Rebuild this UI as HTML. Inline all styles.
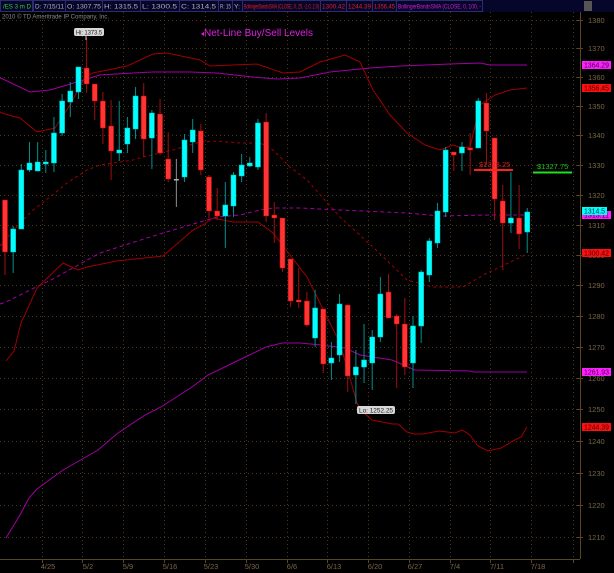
<!DOCTYPE html>
<html><head><meta charset="utf-8"><style>
html,body{margin:0;padding:0;background:#000;width:614px;height:573px;overflow:hidden}
svg{display:block}
text{font-family:"Liberation Sans","DejaVu Sans",sans-serif}
</style></head><body>
<svg id="s" width="614" height="573" viewBox="0 0 614 573" xmlns="http://www.w3.org/2000/svg">
<rect width="614" height="573" fill="#000"/>
<!-- header -->
<rect x="0" y="0" width="614" height="12" fill="#06062a"/>
<g fill="none" stroke="#2c2c70" stroke-width="1">
<rect x="0.5" y="0.5" width="32" height="11"/><rect x="33.5" y="0.5" width="32" height="11"/>
<rect x="65.5" y="0.5" width="37" height="11"/><rect x="102.5" y="0.5" width="38" height="11"/>
<rect x="140.5" y="0.5" width="39" height="11"/><rect x="179.5" y="0.5" width="39" height="11"/>
<rect x="218.5" y="0.5" width="14" height="11"/><rect x="232.5" y="0.5" width="10" height="11"/>
<rect x="242.5" y="0.5" width="78" height="11"/><rect x="320.5" y="0.5" width="26" height="11"/>
<rect x="346.5" y="0.5" width="26" height="11"/><rect x="372.5" y="0.5" width="24" height="11"/>
<rect x="396.5" y="0.5" width="86" height="11"/>
</g>
<rect x="584" y="1" width="8" height="10" fill="#555"/>
<g font-size="6.5" lengthAdjust="spacingAndGlyphs">
<text x="3" y="8.5" fill="#30d030" textLength="28" lengthAdjust="spacingAndGlyphs">/ES 3 m D</text>
<text x="35" y="8.5" fill="#b0b0b0" textLength="29" lengthAdjust="spacingAndGlyphs">D: 7/15/11</text>
<text x="67" y="8.5" fill="#b0b0b0" textLength="34" lengthAdjust="spacingAndGlyphs">O: 1307.75</text>
<text x="104" y="8.5" fill="#b0b0b0" textLength="34" lengthAdjust="spacingAndGlyphs">H: 1315.5</text>
<text x="142" y="8.5" fill="#b0b0b0" textLength="35" lengthAdjust="spacingAndGlyphs">L: 1300.5</text>
<text x="181" y="8.5" fill="#b0b0b0" textLength="35" lengthAdjust="spacingAndGlyphs">C: 1314.5</text>
<text x="220" y="8.5" fill="#b0b0b0" textLength="11" lengthAdjust="spacingAndGlyphs">R: 15</text>
<text x="234" y="8.5" fill="#b0b0b0" textLength="6" lengthAdjust="spacingAndGlyphs">Y:</text>
<text x="244" y="8.5" fill="#e02020" textLength="75" lengthAdjust="spacingAndGlyphs">BollingerBandsSMA (CLOSE, 0, 25, -2.0, 2.0)</text>
<text x="322" y="8.5" fill="#e02020" textLength="23" lengthAdjust="spacingAndGlyphs">1300.42</text>
<text x="348" y="8.5" fill="#e02020" textLength="23" lengthAdjust="spacingAndGlyphs">1244.39</text>
<text x="374" y="8.5" fill="#e02020" textLength="21" lengthAdjust="spacingAndGlyphs">1356.45</text>
<text x="398" y="8.5" fill="#d020d0" textLength="83" lengthAdjust="spacingAndGlyphs">BollingerBandsSMA (CLOSE, 0, 100, -</text>
<text x="2" y="18.5" fill="#8a8a8a" textLength="107" lengthAdjust="spacingAndGlyphs">2010 © TD Ameritrade IP Company, Inc.</text>
</g>
<g id="grid" stroke="#4a3a18" stroke-width="1" stroke-dasharray="1,3"></g>
<!-- axes -->
<line x1="580.5" y1="12" x2="580.5" y2="559" stroke="#5a4520"/>
<line x1="0" y1="559.5" x2="580" y2="559.5" stroke="#5a4520"/>
<g id="ylab" font-size="7.5" fill="#7a6545"></g>
<g font-size="7.5" fill="#7a6545" text-anchor="middle">
<text x="48" y="569">4/25</text><text x="88" y="569">5/2</text><text x="128" y="569">5/9</text>
<text x="170" y="569">5/16</text><text x="211" y="569">5/23</text><text x="252" y="569">5/30</text>
<text x="292" y="569">6/6</text><text x="334" y="569">6/13</text><text x="375" y="569">6/20</text>
<text x="415" y="569">6/27</text><text x="455" y="569">7/4</text><text x="497" y="569">7/11</text>
<text x="538" y="569">7/18</text>
</g>
<!-- bands -->
<g fill="none" stroke-width="1">
<polyline stroke="#a000a0" points="0,78 5,80 30,92 50,90 77,82 100,75 133,73 153,72 190,72 217,73 253,77 277,79 300,78 330,72 370,68 400,66 450,64 480,63 490,65 527,65"/>
<polyline stroke="#a000a0" stroke-dasharray="4,3" points="0,304 6,302 30,290 51,280 100,253 150,237 183,227 217,217 240,215 260,210 273,208 300,208 340,210 407,213 440,216 490,215 527,215"/>
<polyline stroke="#a000a0" points="6,538 20,515 29,498 37,489 63,470 98,450 118,433 145,415 161,407 192,387 208,375 235,362 266,347 282,343 300,343 321,345 345,348 360,355 392,360 415,370 470,371 474,372 527,372"/>
<polyline stroke="#a00000" points="0,112 5,114 20,118 37,132 55,128 70,105 85,77 93,73 127,66 153,54 167,53 200,60 210,66 233,65 257,64 283,73 300,72 320,62 345,55 360,62 373,90 390,115 407,133 425,145 440,150 453,145 462,148 470,147 480,105 495,95 510,90 527,88"/>
<polyline stroke="#a00000" stroke-dasharray="3,3" points="0,246 20,223 33,210 50,197 67,183 87,170 100,165 133,160 143,157 173,150 200,142 217,141 240,143 260,143 273,150 290,167 307,180 340,217 373,247 407,280 433,287 463,287 487,273 500,267 527,254"/>
<polyline stroke="#a00000" points="6,361 14,351 21,323 37,288 63,263 78,270 87,267 117,261 163,256 193,230 203,225 213,218 233,222 258,222 273,233 307,277 340,343 357,403 364,413 372,420 392,424 398,424 407,432 415,434 423,434 439,431 455,433 462,430 470,435 478,446 488,451 501,448 513,441 521,437 527,427"/>
</g>
<g id="candles"></g>
<!-- net lines -->
<line x1="474" y1="170" x2="513" y2="170" stroke="#ff2020" stroke-width="2"/>
<text x="479" y="167" font-size="7.5" fill="#d02020">$1328.25</text>
<line x1="533" y1="172.5" x2="572" y2="172.5" stroke="#20e020" stroke-width="2"/>
<text x="537" y="169" font-size="7.5" fill="#20c020">$1327.75</text>
<text x="204" y="36" font-size="10" fill="#e020e0">Net-Line Buy/Sell Levels</text>
<path d="M201 34 l3 -2 v4z" fill="#e020e0"/>
<rect x="74" y="28" width="30" height="8" rx="2" fill="#d8d8d8"/>
<text x="76" y="34.5" font-size="6" fill="#222" textLength="26" lengthAdjust="spacingAndGlyphs">Hi: 1373.5</text>
<line x1="86" y1="36" x2="86" y2="40" stroke="#ccc"/>
<rect x="357" y="406" width="38" height="8" rx="2" fill="#d8d8d8"/>
<text x="359" y="412.5" font-size="6" fill="#222" textLength="34" lengthAdjust="spacingAndGlyphs">Lo: 1252.25</text>
<!-- right labels -->
<g font-size="7">
<rect x="582" y="61" width="29" height="8" fill="#ff20ff"/><text x="584" y="67.5" fill="#400040" textLength="25" lengthAdjust="spacingAndGlyphs">1364.29</text>
<rect x="582" y="84" width="29" height="8" fill="#ff1010"/><text x="584" y="90.5" fill="#400000" textLength="25" lengthAdjust="spacingAndGlyphs">1356.45</text>
<rect x="582" y="211" width="29" height="8" fill="#ff20ff"/><text x="584" y="217.5" fill="#400040" textLength="25" lengthAdjust="spacingAndGlyphs">1313.11</text>
<rect x="582" y="207" width="25" height="8" fill="#00ffff"/><text x="584" y="213.5" fill="#003030" textLength="21" lengthAdjust="spacingAndGlyphs">1314.5</text>
<rect x="582" y="249" width="29" height="8" fill="#ff1010"/><text x="584" y="255.5" fill="#400000" textLength="25" lengthAdjust="spacingAndGlyphs">1300.42</text>
<rect x="582" y="368" width="29" height="8" fill="#ff20ff"/><text x="584" y="374.5" fill="#400040" textLength="25" lengthAdjust="spacingAndGlyphs">1261.93</text>
<rect x="582" y="423" width="29" height="8" fill="#ff1010"/><text x="584" y="429.5" fill="#400000" textLength="25" lengthAdjust="spacingAndGlyphs">1244.39</text>
</g>
</svg>
<script>
var NS="http://www.w3.org/2000/svg",s=document.getElementById('s');
function el(p,t,a){var e=document.createElementNS(NS,t);for(var k in a)e.setAttribute(k,a[k]);p.appendChild(e);return e;}
var g=document.getElementById('grid');
var ys=[20,48,77,106,135,165,195,225,255,285,316,347,378,409,441,473,505,537];
var yl=document.getElementById('ylab');
ys.forEach(function(y,i){el(g,'line',{x1:0,y1:y+.5,x2:580,y2:y+.5});
 el(s,'line',{x1:577,y1:y+.5,x2:583,y2:y+.5,stroke:'#5a4520'});
 var t=el(yl,'text',{x:588,y:y+3});t.textContent=(1380-10*i);});
[42,82,123,164,205,246,287,327,368,409,450,490,531,573].forEach(function(x){el(g,'line',{x1:x+.5,y1:12,x2:x+.5,y2:559});
 el(s,'line',{x1:x+.5,y1:559,x2:x+.5,y2:563,stroke:'#5a4520'});});
var D=[['r',200,200,252,275],['c',226,229,252,273],['c',164,170,229,229],['c',142,163,170,172],['c',142,162,171,171],['c',150,162,164,173],['c',117,133,163,172],['c',94,101,133,136],['c',82,91,102,117],['c',67,67,92,99],
['r',38,68,84,93],['r',84,84,101,120],['r',92,101,128,144],['r',100,126,151,180],['c',101,150,153,161],['c',117,128,144,153],['c',87,96,129,139],['r',83,96,139,157],['c',110,113,138,169],['r',99,114,153,155],
['r',132,159,179,182],['g',159,179,181,207],['c',134,140,177,182],['c',119,130,142,153],['r',124,131,170,175],['r',175,177,211,218],['r',188,211,216,220],['c',182,205,216,248],['c',172,175,206,217],['c',154,165,176,182],
['c',157,163,166,167],['c',119,123,167,170],['r',113,122,216,222],['r',202,215,218,243],['r',218,218,268,272],['r',259,259,301,307],['r',268,300,302,308],['r',292,301,325,327],['c',290,308,338,347],['r',309,309,364,373],
['c',342,358,363,380],['c',294,304,355,362],['r',305,305,376,392],['c',350,367,375,404],['c',324,360,367,383],['c',330,337,363,390],['c',277,294,337,342],['r',274,292,318,318],['r',314,316,324,388],['r',298,324,367,375],
['c',316,326,363,388],['c',270,272,326,343],['c',238,241,275,282],['c',203,211,243,248],['c',147,150,212,217],['r',152,152,155,171],['c',142,147,153,171],['r',133,148,150,175],['c',98,101,148,148],['r',93,103,131,165],
['r',138,138,199,220],['r',185,201,223,270],['c',172,218,223,233],['r',185,218,234,249],['c',208,212,232,253]];
var cg=document.getElementById('candles');
D.forEach(function(d,i){var x=5+8.16*i;
 var col=d[0]=='r'?'#ff3535':d[0]=='c'?'#00ffff':'#b0b0b0';
 var wc=d[0]=='r'?'#a01010':d[0]=='c'?'#009090':'#909090';
 el(cg,'line',{x1:x,y1:d[1],x2:x,y2:d[4],stroke:wc,'stroke-width':1});
 var h=Math.max(d[3]-d[2],2);
 if(d[0]=='g')el(cg,'rect',{x:x-2.5,y:d[2],width:5,height:1.5,fill:col});
 else el(cg,'rect',{x:x-2.5,y:d[2],width:5,height:h,fill:col,stroke:d[0]=='r'?'#c00000':'#00c0c0','stroke-width':0.5});
});
</script>
</body></html>
